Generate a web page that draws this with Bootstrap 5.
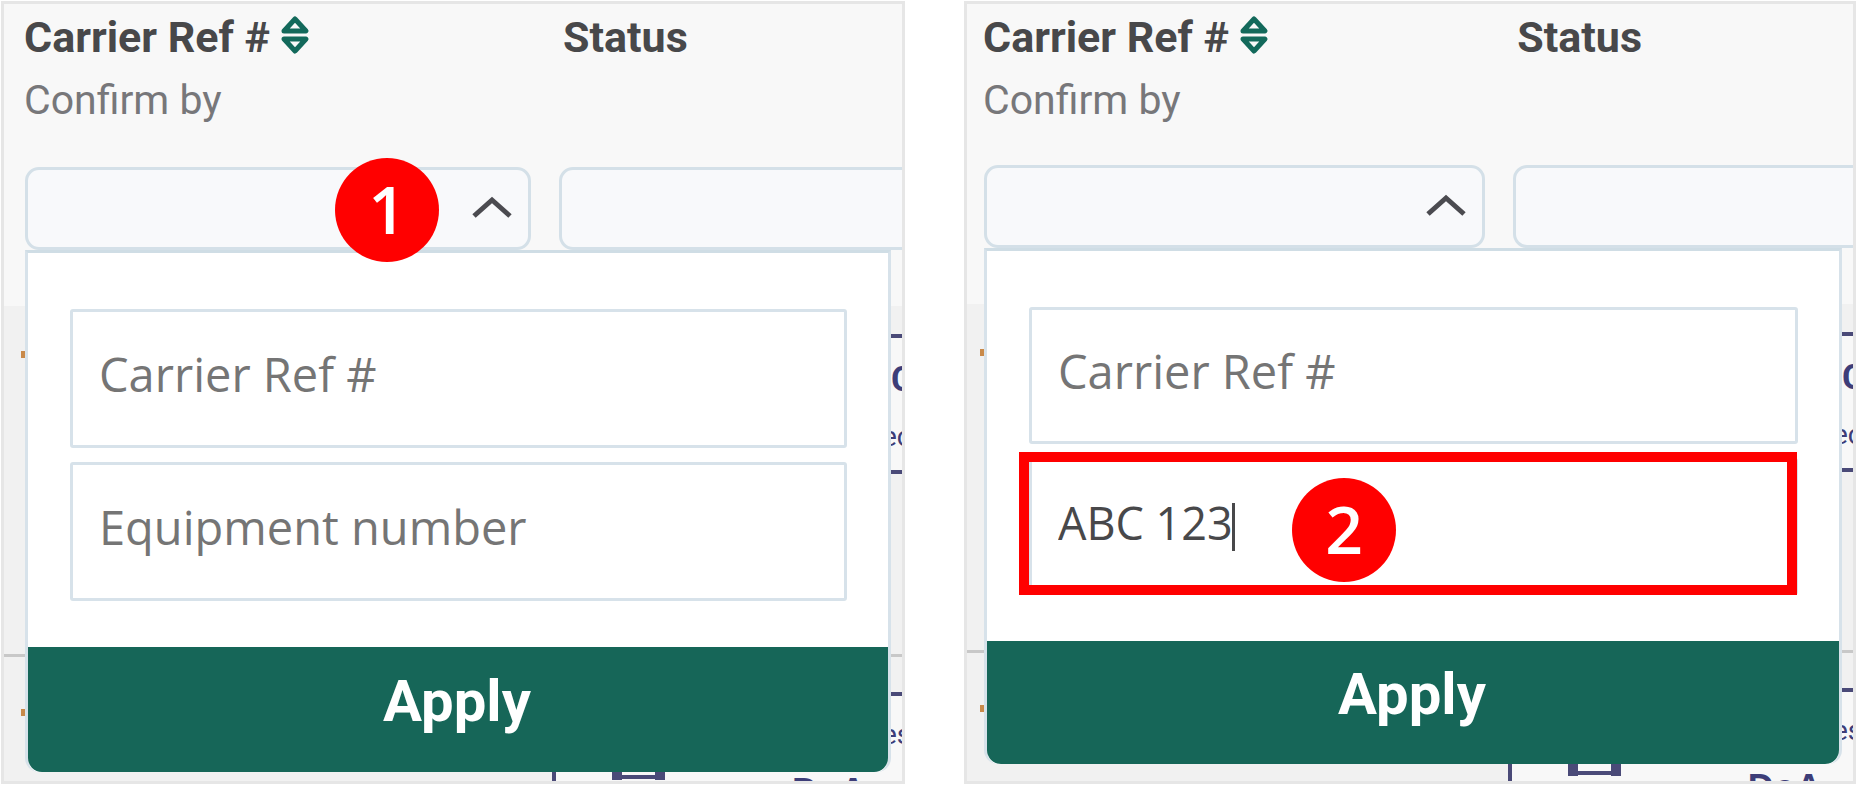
<!DOCTYPE html>
<html lang="en">
<head>
<meta charset="utf-8">
<meta name="viewport" content="width=device-width, initial-scale=1">
<title>Carrier reference filter</title>
<link href="https://cdn.jsdelivr.net/npm/bootstrap@5.3.0/dist/css/bootstrap.min.css" rel="stylesheet">
<style>
  body { font-family: Roboto, "Liberation Sans", sans-serif; color: #48484a; background: #fff; }
  .steps { display: grid; grid-template-columns: 904fr 892fr; column-gap: 59px; padding: 1px; }
  .shot { --side: 21px; --gap-y: 35px; --row-h: 320px; --input-h: 139px; --apply-h: 125px;
    border: 3px solid #e6e6e6; background: #f1f1f1; }
  .shot-b { --side: 17px; --gap-y: 33px; --row-h: 318px; --input-h: 137px; --apply-h: 123px; }

  .head { background: #f8f8f8; padding: 2px 0 56px var(--side); }
  .head-grid { display: grid; grid-template-columns: 506fr 343fr; column-gap: 28px; }
  .head-label { font-size: 43px; line-height: 63px; font-weight: 700; white-space: nowrap; margin-left: -1px; }
  .head-sub { font-size: 41px; line-height: 63px; color: #77777a; margin-left: -1px; }
  .head-grid > .status-label { padding-left: 5px; }
  .sort-btn { width: 30px; height: 40px; margin: 0 0 6px 10px; }
  .filter-row { margin-top: var(--gap-y); }

  .filter-btn, .filter-select { height: 83px; border: 3px solid #d4e0e8; border-radius: 14px; background-color: #f8f9fb; background-image: none; }
  .filter-btn { padding: 0 15px 4px 0; }
  .status-filter { margin-right: -20px; }

  .menu { top: 100%; left: 0; right: 11px; z-index: 3; background: #fff; border: 3px solid #d7e2ea; border-top-color: #cfdde5; border-bottom: 0; border-radius: 0 0 14px 14px; }
  .menu-body { padding: 56px 41px 46px 42px; display: grid; row-gap: 14px; }
  .menu-body .form-control { height: var(--input-h); padding: 0 25px 9px 26px; border: 3px solid #d7e2ea; border-radius: 3px;
    font-family: "Open Sans", "Noto Sans", sans-serif; font-size: 47px; color: #48484a; }
  .menu-body .form-control::placeholder { color: #757575; opacity: 1; }
  .menu-body .typed { font-size: 45px; }
  .btn-apply { height: var(--apply-h); background: #166658; color: #fff; font-size: 58px; font-weight: 700; line-height: 1; border: 0; border-radius: 0 0 14px 14px; padding: 0 2px 17px 0; }

  .step-mark { z-index: 4; width: 104px; height: 104px; border-radius: 50%; background: #f00; color: #fff; padding-bottom: 4px;
    font: 600 66px/1 "Open Sans", "Noto Sans", sans-serif; }
  .mark-one { right: 92px; top: -9px; }
  .mark-two { left: 263px; top: 20px; }
  .outline { left: -10px; right: 1px; top: -6px; bottom: 0; border: 10px solid #f00; pointer-events: none; }
  .caret { left: 203px; top: 45px; width: 3px; height: 48px; background: #48484a; }

  .record { display: grid; grid-template-columns: 548fr 350fr; }
  .record-first { border-bottom: 3px solid #c8c8c8; padding-top: 28px; box-sizing: content-box; height: var(--row-h); }
  .record-last { flex: 1 1 0; padding-top: 35px; overflow: hidden; }
  .flag { width: 4px; height: 7px; background: #c98a4a; margin: 17px 0 0 calc(var(--side) - 4px); }
  .ship-card { height: 140px; border: 4px solid #4a4a78; border-right: 0; background: #f8f8f8; color: #3d3d78; }
  .edge-big { width: 11px; overflow: hidden; font-size: 35px; line-height: 36px; font-weight: 700; }
  .edge-small { width: 20px; overflow: hidden; font-size: 28px; line-height: 30px; }
  .deck { width: 70px; height: 20px; }
  .port { font: 700 36px/40px "Liberation Sans", sans-serif; margin: 22px 0 0 118px; }
</style>
</head>
<body>
<main class="steps min-vh-100">

  <section class="shot position-relative overflow-hidden d-flex flex-column">
    <div class="head">
      <div class="head-grid">
        <div>
          <div class="head-label d-flex align-items-center">Carrier Ref #
            <button class="btn p-0 border-0 sort-btn d-flex" type="button" aria-label="Sort by carrier reference"><svg width="30" height="40" viewBox="0 0 30 40" fill="none" stroke="#13695b" stroke-width="5" stroke-linejoin="round"><path d="M15 4 26 16H4Z"/><path d="M15 36 26 24H4Z"/></svg></button>
          </div>
          <div class="head-sub">Confirm by</div>
        </div>
        <div class="head-label status-label">Status</div>
      </div>
      <div class="head-grid filter-row position-relative">
        <div class="position-relative">
          <button class="btn filter-btn w-100 d-flex align-items-center justify-content-end" type="button" aria-expanded="true" aria-label="Filter by carrier reference"><svg width="42" height="24" viewBox="0 0 42 24" fill="none" stroke="#4b4b50" stroke-width="5"><path d="M3 21 21 5 39 21"/></svg></button>
          <span class="step-mark mark-one position-absolute d-flex align-items-center justify-content-center">1</span>
        </div>
        <div class="status-filter"><select class="form-select filter-select" aria-label="Filter by status"><option></option></select></div>
        <form class="menu position-absolute">
          <div class="menu-body">
            <input class="form-control" type="text" placeholder="Carrier Ref #" aria-label="Carrier Ref #">
            <input class="form-control" type="text" placeholder="Equipment number" aria-label="Equipment number">
          </div>
          <button class="btn btn-apply w-100 d-flex align-items-center justify-content-center" type="button">Apply</button>
        </form>
      </div>
    </div>
    <div class="record record-first">
      <div class="flag"></div>
      <div class="ship-card d-flex flex-column align-items-end">
        <div class="edge-big mt-4">C</div>
        <div class="edge-small mt-4">ec</div>
      </div>
    </div>
    <div class="record record-last">
      <div class="flag"></div>
      <div class="ship-card">
        <div class="d-flex justify-content-end"><div class="edge-small mt-4">es</div></div>
        <div class="d-flex align-items-start">
          <svg class="deck ms-5 mt-3" viewBox="0 0 70 20"><path d="M13 0v14M56 0v14" stroke="#4a4a78" stroke-width="10"/><path d="M12 11h44" stroke="#4a4a78" stroke-width="4"/></svg>
          <div class="port">DoA</div>
        </div>
      </div>
    </div>
  </section>

  <section class="shot shot-b position-relative overflow-hidden d-flex flex-column">
    <div class="head">
      <div class="head-grid">
        <div>
          <div class="head-label d-flex align-items-center">Carrier Ref #
            <button class="btn p-0 border-0 sort-btn d-flex" type="button" aria-label="Sort by carrier reference"><svg width="30" height="40" viewBox="0 0 30 40" fill="none" stroke="#13695b" stroke-width="5" stroke-linejoin="round"><path d="M15 4 26 16H4Z"/><path d="M15 36 26 24H4Z"/></svg></button>
          </div>
          <div class="head-sub">Confirm by</div>
        </div>
        <div class="head-label status-label">Status</div>
      </div>
      <div class="head-grid filter-row position-relative">
        <div>
          <button class="btn filter-btn w-100 d-flex align-items-center justify-content-end" type="button" aria-expanded="true" aria-label="Filter by carrier reference"><svg width="42" height="24" viewBox="0 0 42 24" fill="none" stroke="#4b4b50" stroke-width="5"><path d="M3 21 21 5 39 21"/></svg></button>
        </div>
        <div class="status-filter"><select class="form-select filter-select" aria-label="Filter by status"><option></option></select></div>
        <form class="menu position-absolute">
          <div class="menu-body">
            <input class="form-control" type="text" placeholder="Carrier Ref #" aria-label="Carrier Ref #">
            <div class="position-relative">
              <input class="form-control typed" type="text" value="ABC 123" aria-label="Equipment number">
              <span class="caret position-absolute"></span>
              <span class="outline position-absolute"></span>
              <span class="step-mark mark-two position-absolute d-flex align-items-center justify-content-center">2</span>
            </div>
          </div>
          <button class="btn btn-apply w-100 d-flex align-items-center justify-content-center" type="button">Apply</button>
        </form>
      </div>
    </div>
    <div class="record record-first">
      <div class="flag"></div>
      <div class="ship-card d-flex flex-column align-items-end">
        <div class="edge-big mt-4">C</div>
        <div class="edge-small mt-4">ec</div>
      </div>
    </div>
    <div class="record record-last">
      <div class="flag"></div>
      <div class="ship-card">
        <div class="d-flex justify-content-end"><div class="edge-small mt-4">es</div></div>
        <div class="d-flex align-items-start">
          <svg class="deck ms-5 mt-3" viewBox="0 0 70 20"><path d="M13 0v14M56 0v14" stroke="#4a4a78" stroke-width="10"/><path d="M12 11h44" stroke="#4a4a78" stroke-width="4"/></svg>
          <div class="port">DoA</div>
        </div>
      </div>
    </div>
  </section>

</main>
<script src="https://cdn.jsdelivr.net/npm/bootstrap@5.3.0/dist/js/bootstrap.bundle.min.js"></script>
</body>
</html>
